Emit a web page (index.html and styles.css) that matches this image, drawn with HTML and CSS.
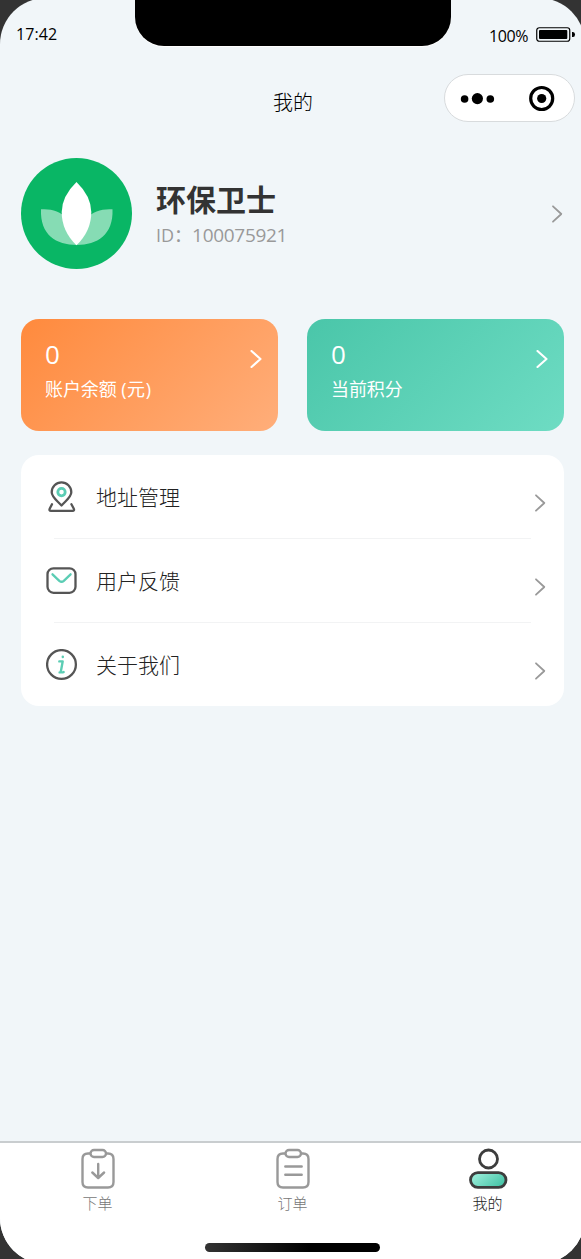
FILE: index.html
```html
<!DOCTYPE html>
<html lang="zh-CN">
<head>
<meta charset="utf-8">
<title>我的</title>
<link rel="stylesheet" href="styles.css">
</head>
<body>
<div class="phone">
  <header class="status">
    <span class="time">17:42</span>
    <span class="notch"></span>
    <span class="power"><span class="percent">100%</span>
      <svg class="battery" width="40" height="15" viewBox="0 0 40 15"><rect x=".75" y=".75" width="33" height="13.5" rx="2.5" fill="none" stroke="#000" stroke-width="1.2"/><rect x="3" y="3" width="28.3" height="9" rx="1" fill="#000"/><path d="M36 5h1q2 0 2 2.5T37 10h-1z"/></svg>
    </span>
  </header>
  <nav class="navbar">
    <h1 class="title">我的</h1>
    <div class="capsule">
      <svg width="129" height="46" viewBox="0 0 129 46"><circle cx="19.6" cy="24" r="3.8"/><circle cx="32.4" cy="23.6" r="5.6"/><circle cx="45.3" cy="24" r="3.8"/><circle cx="96.7" cy="23.5" r="11" fill="none" stroke="#000" stroke-width="3.2"/><circle cx="96.7" cy="23.5" r="4.6"/></svg>
    </div>
  </nav>
  <main class="content">
    <section class="profile">
      <svg class="avatar" width="111" height="111" viewBox="0 0 111 111"><circle cx="55.5" cy="55.5" r="55.5" fill="#09b665"/><path d="M20 51.3C30 50.5 40 53.5 45 60L56 87C35 87 19 77 20 51.3zM91.5 51.3C81.5 50.5 71.5 53.5 66 60L56 87C76 87 92.5 77 91.5 51.3z" fill="#86dcb4"/><path d="M55.5 24Q70 38 70.3 54Q70.3 73 55.5 87.3Q40.7 73 40.7 54Q41 38 55.5 24z" fill="#fff"/></svg>
      <div class="who"><h2 class="name">环保卫士</h2><p class="uid">ID：<span class="number">100075921</span></p></div>
      <svg class="arrow" width="12" height="18" viewBox="0 0 12 18"><path d="M2 1.3l8.3 7.7L2 16.7"/></svg>
    </section>
    <section class="wallet">
      <a class="card orange"><div><b class="amount">0</b><span class="label">账户余额&nbsp;<span class="unit">(元)</span></span></div><svg class="arrow white" width="12" height="18" viewBox="0 0 12 18"><path d="M1.5 1l9 8-9 8"/></svg></a>
      <a class="card green"><div><b class="amount">0</b><span class="label">当前积分</span></div><svg class="arrow white" width="12" height="18" viewBox="0 0 12 18"><path d="M1.5 1l9 8-9 8"/></svg></a>
    </section>
    <section class="menu">
      <a class="row">
        <svg class="icon" viewBox="0 0 32 32"><path d="M15.5 24.5C10.5 19 5.7 15.8 5.7 11.2A9.8 9.8 0 0 1 25.3 11.2C25.3 15.8 20.5 19 15.5 24.5z"/><path d="M6 23.2L3.8 27.5Q2.7 29.8 5 29.8H26.5Q28.8 29.8 27.7 27.5L25.4 23.2"/><circle class="mint" cx="15.5" cy="11.1" r="3.7" stroke-width="2.8"/></svg>
        <span class="text">地址管理</span><svg class="arrow" width="12" height="18" viewBox="0 0 12 18"><path d="M2 1.3l8.3 7.7L2 16.7"/></svg></a>
      <a class="row">
        <svg class="icon" viewBox="0 0 32 32"><rect x="1.5" y="3.3" width="28" height="24.5" rx="6"/><path class="mint" d="M6.5 9.3l6.8 6.5q2.3 1.9 4.5 0l6.8-6.5"/></svg>
        <span class="text">用户反馈</span><svg class="arrow" width="12" height="18" viewBox="0 0 12 18"><path d="M2 1.3l8.3 7.7L2 16.7"/></svg></a>
      <a class="row">
        <svg class="icon" viewBox="0 0 32 32"><circle cx="15.5" cy="15.5" r="14.4"/><path class="mint" d="M13.3 12.4h3.4L15 21.6q-.5 2.4 2.6 1.5M13.6 23.4h2M16.8 7.6v.5" stroke-width="2.4"/></svg>
        <span class="text">关于我们</span><svg class="arrow" width="12" height="18" viewBox="0 0 12 18"><path d="M2 1.3l8.3 7.7L2 16.7"/></svg></a>
    </section>
  </main>
  <footer class="tabs">
    <div class="tablist">
      <a class="tab"><svg class="tabicon" viewBox="0 0 40 42"><path d="M12 5.5H10Q4.5 5.5 4.5 11V34Q4.5 39.5 10 39.5H30Q35.5 39.5 35.5 34V11Q35.5 5.5 30 5.5H28.5"/><rect x="12.5" y="2" width="15.5" height="7" rx="3.5"/><path d="M20.2 16v13.5M14.3 24.5l5.9 5.500 5.900-5.500"/></svg><span>下单</span></a>
      <a class="tab"><svg class="tabicon" viewBox="0 0 40 42"><path d="M12 5.5H10Q4.5 5.5 4.5 11V34Q4.5 39.5 10 39.5H30Q35.5 39.5 35.5 34V11Q35.5 5.5 30 5.5H28.5"/><rect x="12.5" y="2" width="15.5" height="7" rx="3.5"/><path d="M12.3 18.5h16.4M12.3 26.7h16.4"/></svg><span>订单</span></a>
      <a class="tab active"><svg class="tabicon" viewBox="0 0 40 42"><defs><linearGradient id="mint" x1="0" y1="0" x2="1" y2=".5"><stop stop-color="#a6f3e1"/><stop offset="1" stop-color="#4bc7aa"/></linearGradient></defs><circle cx="20.5" cy="11" r="9"/><rect x="2.5" y="24.6" width="35.5" height="14.7" rx="7.35" fill="url(#mint)"/></svg><span>我的</span></a>
    </div>
    <div class="home"></div>
  </footer>
</div>
</body>
</html>
```
FILE: styles.css
```css
* { box-sizing: border-box; }
body { margin: 0; height: 1259px; overflow: hidden; background: #333; font-family: "Open Sans", "Noto Sans CJK SC", sans-serif; }
h1, h2, p { margin: 0; font-weight: 400; }
.phone { display: flex; flex-direction: column; width: 585px; height: 1266px; margin-top: -2px; border-radius: 46px; overflow: hidden; background: #f1f6f9; }
.status { display: grid; grid-template-columns: 135px 316px 1fr; height: 48px; font-size: 16px; line-height: 22px; color: #000; }
.time { padding: 25px 0 0 16px; letter-spacing: .1px; }
.notch { height: 48px; background: #000; border-radius: 0 0 29px 29px; box-shadow: 0 1px 0 #fff; }
.power { display: flex; align-items: flex-start; padding: 27px 0 0 38px; }
.percent { width: 47px; letter-spacing: -.4px; }
.battery { margin-top: 2px; flex: none; }
.navbar { display: grid; grid-template-columns: 1fr 131px; height: 112px; padding: 28px 10px 0 0; }
.title { padding: 14px 0 0 142px; font-size: 20px; line-height: 30px; text-align: center; font-weight: 300; color: #000; }
.capsule { width: 131px; height: 48px; border: 1px solid #d8dbdd; border-radius: 24px; background: #fff; }
.capsule svg { display: block; }
.content { flex: 1; padding: 0 21px; }
.profile { display: flex; align-items: center; height: 111px; }
.avatar { flex: none; }
.who { flex: 1; padding: 3px 0 0 24px; }
.name { font-size: 30px; line-height: 40px; font-weight: 700; color: #333; }
.uid { font-size: 18px; line-height: 30px; color: #999; }
.number { font-size: 19px; letter-spacing: -.3px; }
.arrow { flex: none; fill: none; stroke: #999; stroke-width: 1.8; stroke-linecap: round; stroke-linejoin: round; }
.profile .arrow { margin-right: 1px; }
.wallet { display: grid; grid-template-columns: 257px 257px; gap: 29px; margin-top: 50px; }
.card { display: flex; justify-content: space-between; height: 112px; padding: 18px 16px 0 24px; border-radius: 18px; color: #fff; }
.orange { background: linear-gradient(135deg, #ff8a3d, #ffae7a); }
.green { background: linear-gradient(135deg, #4ac6a9, #6edcc3); }
.amount { display: block; font-size: 26px; line-height: 34px; font-weight: 400; }
.label { display: block; font-size: 18px; line-height: 36px; letter-spacing: -.1px; }
.unit { letter-spacing: .6px; }
.white { margin-top: 13px; stroke: #fff; stroke-width: 2.1; }
.menu { width: 543px; height: 251px; margin-top: 24px; padding: 0 18px 0 25px; border-radius: 18px; background: #fff; }
.row { display: flex; align-items: center; height: 84px; background: linear-gradient(#f2f3f4, #f2f3f4) 8px 83px / 477px 1px no-repeat; }
.row:last-child { background: none; }
.icon { width: 32px; height: 32px; flex: none; fill: none; stroke: #555; stroke-width: 2.3; stroke-linecap: round; stroke-linejoin: round; }
.icon .mint { stroke: #5bcdb4; }
.text { flex: 1; padding: 0 0 1px 18px; font-size: 21px; line-height: 32px; font-weight: 300; color: #222; }
.row .arrow { margin-top: 12px; }
.tabs { height: 123px; border-top: 2px solid #c9cdcf; background: #fff; }
.tablist { display: grid; grid-template-columns: repeat(3, 1fr); height: 100px; }
.tab { display: flex; flex-direction: column; align-items: center; gap: 2px; padding-top: 5px; font-size: 15px; line-height: 22px; font-weight: 300; color: #777; }
.tabicon { width: 40px; height: 42px; fill: none; stroke: #999; stroke-width: 2.4; stroke-linecap: round; stroke-linejoin: round; }
.active { color: #222; }
.active .tabicon { stroke: #3d3d3d; stroke-width: 2.8; }
.home { width: 175px; height: 9px; margin: 0 auto; border-radius: 5px; background: linear-gradient(90deg, #333, #000 60%); }
```
